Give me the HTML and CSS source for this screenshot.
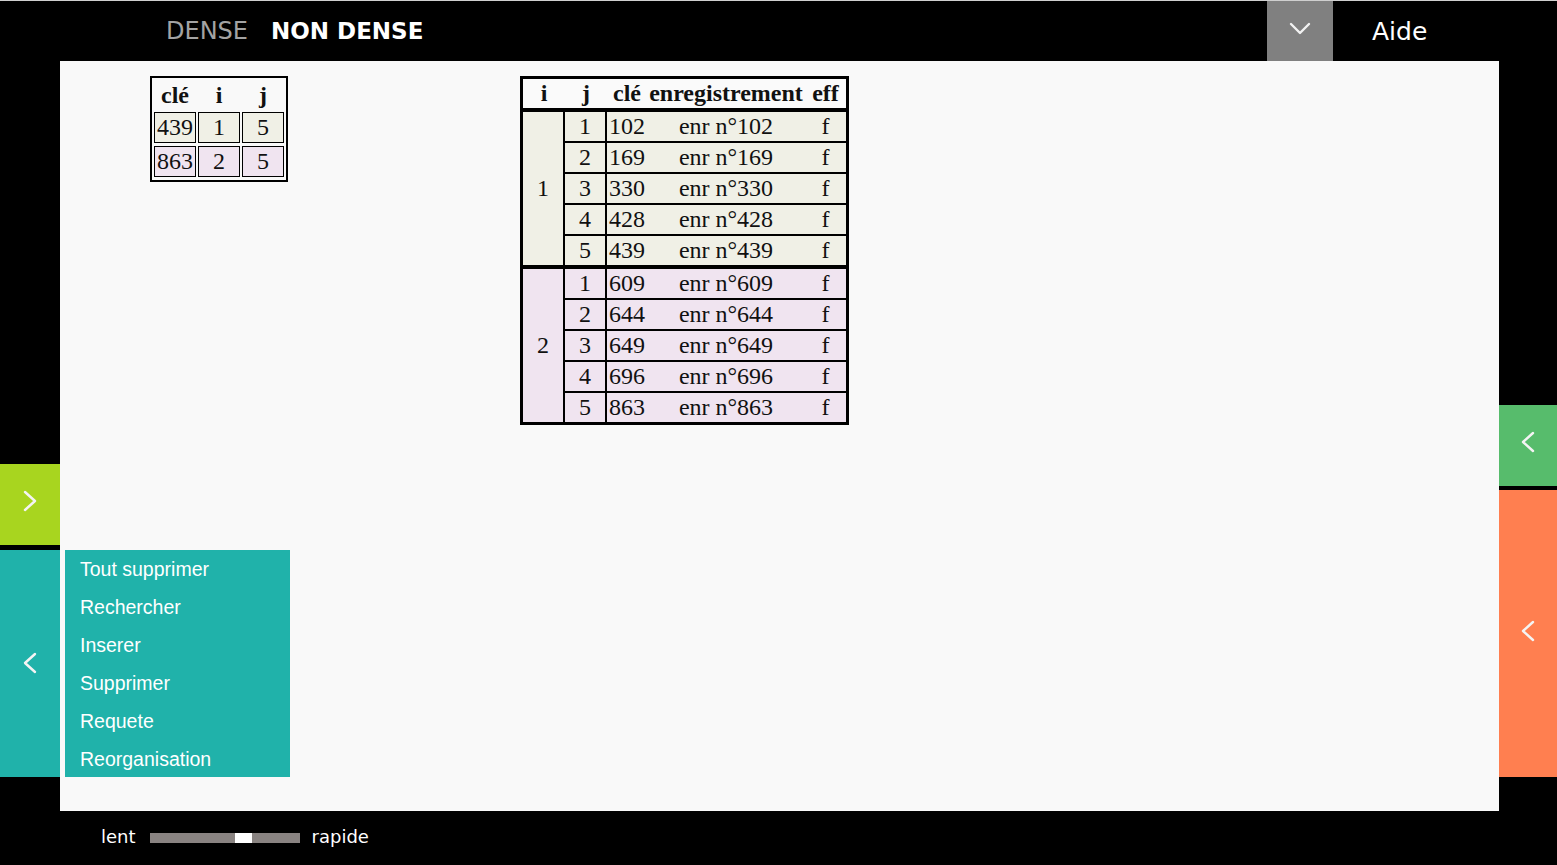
FILE: index.html
```html
<!DOCTYPE html>
<html lang="fr">
<head>
<meta charset="utf-8">
<title>Hachage non dense</title>
<link rel="stylesheet" href="styles.css">
</head>
<body>
<div class="app">
  <header class="topbar">
    <span class="mode mode-off">DENSE</span>
    <span class="mode mode-on">NON DENSE</span>
    <div class="drop">
      <svg width="22" height="14" viewBox="0 0 22 14"><polyline points="2,2 11,11 20,2" fill="none" stroke="#f2f2f2" stroke-width="2.4" stroke-linecap="round" stroke-linejoin="round"/></svg>
    </div>
    <div class="help">Aide</div>
  </header>

  <aside class="side side-left">
    <button class="sbtn lime">
      <svg width="16" height="24" viewBox="0 0 16 24"><polyline points="3,3 13,12 3,21" fill="none" stroke="#f4f4f4" stroke-width="2.4" stroke-linecap="round" stroke-linejoin="round"/></svg>
    </button>
    <button class="sbtn teal tall-l">
      <svg width="16" height="24" viewBox="0 0 16 24"><polyline points="13,3 3,12 13,21" fill="none" stroke="#f4f4f4" stroke-width="2.4" stroke-linecap="round" stroke-linejoin="round"/></svg>
    </button>
  </aside>

  <main class="main">
    <table class="small">
      <thead>
        <tr><th>clé</th><th>i</th><th>j</th></tr>
      </thead>
      <tbody>
        <tr class="g1"><td>439</td><td>1</td><td>5</td></tr>
        <tr class="g2"><td>863</td><td>2</td><td>5</td></tr>
      </tbody>
    </table>

    <table class="big">
      <colgroup>
        <col class="c-i"><col class="c-j"><col class="c-k"><col class="c-e"><col class="c-f">
      </colgroup>
      <thead>
        <tr><th>i</th><th>j</th><th>clé</th><th>enregistrement</th><th>eff</th></tr>
      </thead>
      <tbody class="g1">
        <tr class="first"><td class="ci" rowspan="5">1</td><td class="cj">1</td><td class="ck">102</td><td class="ce">enr n°102</td><td class="cf">f</td></tr>
        <tr><td class="cj">2</td><td class="ck">169</td><td class="ce">enr n°169</td><td class="cf">f</td></tr>
        <tr><td class="cj">3</td><td class="ck">330</td><td class="ce">enr n°330</td><td class="cf">f</td></tr>
        <tr><td class="cj">4</td><td class="ck">428</td><td class="ce">enr n°428</td><td class="cf">f</td></tr>
        <tr><td class="cj">5</td><td class="ck">439</td><td class="ce">enr n°439</td><td class="cf">f</td></tr>
      </tbody>
      <tbody class="g2">
        <tr class="first sep"><td class="ci" rowspan="5">2</td><td class="cj">1</td><td class="ck">609</td><td class="ce">enr n°609</td><td class="cf">f</td></tr>
        <tr><td class="cj">2</td><td class="ck">644</td><td class="ce">enr n°644</td><td class="cf">f</td></tr>
        <tr><td class="cj">3</td><td class="ck">649</td><td class="ce">enr n°649</td><td class="cf">f</td></tr>
        <tr><td class="cj">4</td><td class="ck">696</td><td class="ce">enr n°696</td><td class="cf">f</td></tr>
        <tr><td class="cj">5</td><td class="ck">863</td><td class="ce">enr n°863</td><td class="cf">f</td></tr>
      </tbody>
    </table>

    <nav class="menu">
      <a>Tout supprimer</a>
      <a>Rechercher</a>
      <a>Inserer</a>
      <a>Supprimer</a>
      <a>Requete</a>
      <a>Reorganisation</a>
    </nav>
  </main>

  <aside class="side side-right">
    <button class="sbtn green">
      <svg width="16" height="24" viewBox="0 0 16 24"><polyline points="13,3 3,12 13,21" fill="none" stroke="#f4f4f4" stroke-width="2.4" stroke-linecap="round" stroke-linejoin="round"/></svg>
    </button>
    <button class="sbtn coral tall-r">
      <svg width="16" height="24" viewBox="0 0 16 24"><polyline points="13,3 3,12 13,21" fill="none" stroke="#f4f4f4" stroke-width="2.4" stroke-linecap="round" stroke-linejoin="round"/></svg>
    </button>
  </aside>

  <footer class="bottombar">
    <span class="speed">lent</span>
    <div class="slider"><div class="thumb"></div></div>
    <span class="speed">rapide</span>
  </footer>
</div>
</body>
</html>
```

FILE: styles.css
```css
* { box-sizing: border-box; }

html, body {
  margin: 0;
  padding: 0;
  background: #000;
  width: 1557px;
  height: 865px;
  overflow: hidden;
}

.app {
  display: grid;
  grid-template-columns: 60px 1439px 58px;
  grid-template-rows: 61px 750px 54px;
  height: 865px;
}

/* top bar */
.topbar {
  grid-column: 1 / 4;
  grid-row: 1;
  display: flex;
  align-items: center;
  padding-left: 166px;
  border-top: 1px solid #cfcfcf;
  font-family: "DejaVu Sans", sans-serif;
}
.mode { font-size: 24px; line-height: 1; }
.mode-off { color: #a3a3a3; }
.mode-on { color: #fff; font-weight: bold; font-size: 23px; margin-left: 23px; }

.drop {
  margin-left: auto;
  width: 66px;
  height: 100%;
  background: #808080;
  display: flex;
  align-items: center;
  justify-content: center;
  padding-bottom: 4px;
}
.help {
  width: 224px;
  padding-left: 39px;
  color: #fff;
  font-size: 25px;
  line-height: 1;
}

/* side columns */
.side {
  grid-row: 2;
  display: flex;
  flex-direction: column;
  justify-content: flex-end;
  padding-bottom: 34px;
}
.side-left { grid-column: 1; gap: 5px; }
.side-right { grid-column: 3; gap: 4px; }

.sbtn {
  border: 0;
  padding: 0;
  margin: 0;
  width: 100%;
  height: 81px;
  display: flex;
  align-items: center;
  justify-content: center;
}
.sbtn svg { display: block; }
.lime { background: #a8d51f; padding-bottom: 8px; }
.teal { background: #20b2aa; }
.green { background: #57bc6c; padding-bottom: 8px; }
.coral { background: #ff7f50; }
.tall-l { height: 227px; padding-bottom: 2px; }
.tall-r { height: 287px; padding-bottom: 5px; }

/* main area */
.main {
  grid-column: 2;
  grid-row: 2;
  position: relative;
  background: #f9f9f9;
  display: grid;
  grid-template-columns: 370px auto;
  align-items: start;
  justify-items: start;
  justify-content: start;
  padding: 15px 0 0 90px;
}

/* small table */
.small {
  border: 2px solid #000;
  border-spacing: 2px 3px;
  font-family: "Liberation Serif", serif;
  font-size: 24px;
  color: #111;
}
.small th {
  font-weight: bold;
  line-height: 28px;
  padding: 0;
  text-align: center;
}
.small td {
  width: 42px;
  border: 1px solid #000;
  line-height: 29px;
  padding: 0;
  text-align: center;
}
.small .g1 td { background: #f0f0e6; }
.small .g2 td { background: #f0e4f0; }

/* big table */
.big {
  border: 3px solid #000;
  border-spacing: 0;
  table-layout: fixed;
  width: 329px;
  font-family: "Liberation Serif", serif;
  font-size: 24px;
  color: #111;
}
.c-i { width: 42px; }
.c-j { width: 42px; }
.c-k { width: 40px; }
.c-e { width: 158px; }
.c-f { width: 41px; }

.big th {
  font-weight: bold;
  line-height: 29px;
  padding: 0;
  text-align: center;
  border-bottom: 4px solid #000;
  background: #fafafa;
  white-space: nowrap;
}
.big td {
  padding: 0;
  line-height: 29px;
  text-align: center;
  border-top: 2px solid #000;
}
.big tr.first td { border-top: 0; }
.big tr.sep td { border-top: 4px solid #000; }
.big td.ci { border-right: 2px solid #000; }
.big td.cj { border-right: 2px solid #000; }
.big td.ck { text-align: left; padding-left: 2px; }
.big .g1 td { background: #f0f0e6; }
.big .g2 td { background: #f0e4f0; }

/* menu */
.menu {
  position: absolute;
  left: 5px;
  top: 489px;
  width: 225px;
  height: 227px;
  background: #20b2aa;
  display: flex;
  flex-direction: column;
  padding-left: 15px;
}
.menu a {
  display: block;
  height: 38px;
  line-height: 38px;
  color: #fff;
  font-family: "Liberation Sans", Arial, sans-serif;
  font-size: 19.5px;
}

/* bottom bar */
.bottombar {
  grid-column: 1 / 4;
  grid-row: 3;
  display: flex;
  align-items: center;
  padding-left: 101px;
  padding-bottom: 2px;
  font-family: "DejaVu Sans", sans-serif;
}
.speed { color: #fff; font-size: 18px; line-height: 1; }
.slider {
  position: relative;
  width: 150px;
  height: 10px;
  background: #898381;
  margin: 2px 12px 0 14px;
}
.thumb {
  position: absolute;
  left: 85px;
  top: 0;
  width: 17px;
  height: 10px;
  background: #fff;
}
```
